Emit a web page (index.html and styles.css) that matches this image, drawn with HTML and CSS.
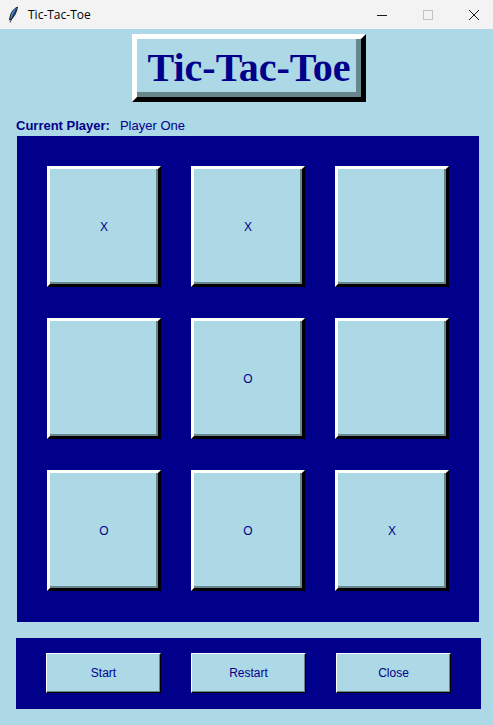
FILE: index.html
```html
<!DOCTYPE html>
<html lang="en">
<head>
<meta charset="utf-8">
<title>Tic-Tac-Toe</title>
<link rel="stylesheet" href="styles.css">
</head>
<body>
<div class="titlebar">
  <div class="tb-left">
    <svg class="tb-icon" width="12" height="18" viewBox="0 0 12 18">
      <path d="M10.5 1 C7 2.5 4 6 3 11 L2.5 14 L4 13.5 C7 11 9.5 7 10.5 1 Z" fill="#3f7fd6" stroke="#1a1a1a" stroke-width="0.9"/>
      <path d="M9.5 3 L3 16.5" stroke="#1a1a1a" stroke-width="0.9"/>
    </svg>
    <span class="tb-title">Tic-Tac-Toe</span>
  </div>
  <div class="tb-controls">
    <svg class="tb-btn" width="12" height="12" viewBox="0 0 12 12"><path d="M1 6.5 H11" stroke="#1a1a1a" stroke-width="1"/></svg>
    <svg class="tb-btn" width="12" height="12" viewBox="0 0 12 12"><rect x="1.5" y="1.5" width="9" height="9" fill="none" stroke="#c4c4c4" stroke-width="1"/></svg>
    <svg class="tb-btn" width="12" height="12" viewBox="0 0 12 12"><path d="M1 1 L11 11 M11 1 L1 11" stroke="#1a1a1a" stroke-width="1"/></svg>
  </div>
</div>
<div class="app">
  <div class="title-wrap">
    <div class="title">Tic-Tac-Toe</div>
  </div>
  <div class="status">
    <span class="status-label">Current Player:</span><span class="status-value">Player One</span>
  </div>
  <div class="board">
    <div class="cell">X</div>
    <div class="cell">X</div>
    <div class="cell"></div>
    <div class="cell"></div>
    <div class="cell">O</div>
    <div class="cell"></div>
    <div class="cell">O</div>
    <div class="cell">O</div>
    <div class="cell">X</div>
  </div>
  <div class="controls">
    <div class="btn">Start</div>
    <div class="btn">Restart</div>
    <div class="btn">Close</div>
  </div>
</div>
</body>
</html>
```
FILE: styles.css
```css
* { box-sizing: border-box; }
html, body { margin: 0; padding: 0; }
body {
  background: #add8e6;
  width: 493px;
  height: 725px;
  overflow: hidden;
  font-family: "Liberation Sans", Arial, sans-serif;
  color: #00008b;
}
.titlebar {
  height: 29px;
  background: #f3f3f3;
  display: flex;
  align-items: center;
  justify-content: space-between;
}
.tb-left {
  display: flex;
  align-items: center;
  padding-left: 7px;
}
.tb-icon { display: block; }
.tb-title {
  margin-left: 9px;
  font-family: "Open Sans", "Liberation Sans", sans-serif;
  font-size: 12px;
  color: #000;
}
.tb-controls {
  display: flex;
  align-items: center;
  gap: 34px;
  padding-right: 13px;
}
.tb-btn { display: block; }
.app {
  padding-top: 5px;
}
.title-wrap {
  display: flex;
  justify-content: center;
  padding-left: 5px;
}
.title {
  width: 234px;
  height: 68px;
  border-style: solid;
  border-width: 5px;
  border-color: #ffffff #000000 #000000 #ffffff;
  box-shadow: inset -5px -5px 0 #69868d;
  background: #add8e6;
  font-family: "Liberation Serif", "Times New Roman", serif;
  font-weight: bold;
  font-size: 40px;
  line-height: 48px;
  padding: 5px;
  text-align: center;
  white-space: nowrap;
  color: #00008b;
}
.status {
  margin-top: 16px;
  padding-left: 16px;
  font-size: 13px;
  line-height: 15px;
  height: 15px;
}
.status-label { font-weight: bold; }
.status-value { margin-left: 10px; }
.board {
  margin-top: 3px;
  margin-left: 17px;
  width: 462px;
  height: 486px;
  background: #00008b;
  padding: 30px 30px 31px 30px;
  display: grid;
  grid-template-columns: repeat(3, 114px);
  grid-template-rows: repeat(3, 121px);
  column-gap: 30px;
  row-gap: 31px;
}
.cell {
  border-style: solid;
  border-width: 3px;
  border-color: #ffffff #000000 #000000 #ffffff;
  box-shadow: inset -2px -2px 0 #69868d;
  background: #add8e6;
  display: flex;
  align-items: center;
  justify-content: center;
  font-size: 12px;
  color: #00008b;
}
.controls {
  margin-top: 16px;
  margin-left: 16px;
  width: 465px;
  height: 71px;
  background: #00008b;
  padding: 15px 30px 16px 30px;
  display: flex;
  gap: 30px;
}
.btn {
  width: 115px;
  height: 40px;
  border-style: solid;
  border-width: 1px;
  border-color: #ffffff #000000 #000000 #ffffff;
  box-shadow: inset -1px -1px 0 #69868d;
  background: #add8e6;
  display: flex;
  align-items: center;
  justify-content: center;
  font-size: 12px;
  color: #00008b;
}
```
